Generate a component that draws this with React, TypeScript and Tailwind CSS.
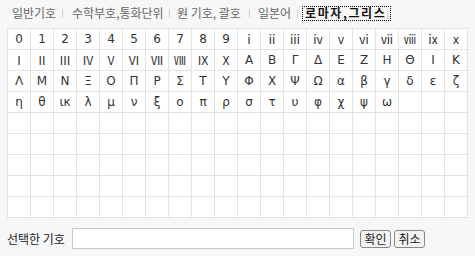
import React from "react";

const rows: string[][] = [
  ["0","1","2","3","4","5","6","7","8","9","ⅰ","ⅱ","ⅲ","ⅳ","ⅴ","ⅵ","ⅶ","ⅷ","ⅸ","ⅹ"],
  ["Ⅰ","Ⅱ","Ⅲ","Ⅳ","Ⅴ","Ⅵ","Ⅶ","Ⅷ","Ⅸ","Ⅹ","Α","Β","Γ","Δ","Ε","Ζ","Η","Θ","Ι","Κ"],
  ["Λ","Μ","Ν","Ξ","Ο","Π","Ρ","Σ","Τ","Υ","Φ","Χ","Ψ","Ω","α","β","γ","δ","ε","ζ"],
  ["η","θ","ικ","λ","μ","ν","ξ","ο","π","ρ","σ","τ","υ","φ","χ","ψ","ω","","",""],
];

const cells: string[] = [];
for (let r = 0; r < 9; r++) {
  for (let c = 0; c < 20; c++) {
    cells.push(rows[r] ? rows[r][c] : "");
  }
}

const isRoman = (s: string) => /[\u2160-\u217f]/.test(s);

function Sep() {
  return <span className="inline-block h-[9px] w-px shrink-0 bg-[#d0d0d0]" />;
}

export default function App() {
  return (
    <div
      className="w-[475px] h-[256px] bg-[#f7f7f7] text-[12px] overflow-hidden"
      style={{ fontFamily: '"Noto Sans CJK KR", "DejaVu Sans", sans-serif' }}
    >
      <div className="flex h-[28px] items-center pl-[12px] pb-[2px] text-[#666] leading-none whitespace-nowrap">
        <span className="w-[50px] shrink-0">일반기호</span>
        <Sep />
        <span className="w-[106px] shrink-0 pl-[9px]">수학부호,통화단위</span>
        <Sep />
        <span className="w-[79px] shrink-0 pl-[7px]">원 기호, 괄호</span>
        <Sep />
        <span className="w-[47px] shrink-0 pl-[8px]">일본어</span>
        <Sep />
        <span className="ml-[4px] flex h-[15px] w-[89px] shrink-0 items-center border border-dotted border-black pl-[2px] font-bold tracking-[1.6px] text-[#111]">
          로마자,그리스
        </span>
        <span className="-ml-[4px]">
          <Sep />
        </span>
      </div>
      <div className="ml-[7px] grid w-[461px] grid-cols-[repeat(20,23px)] border-l border-t border-[#e2e2e2] bg-white">
        {cells.map((ch, i) => (
          <div
            key={i}
            className="flex h-[21px] items-center justify-center border-b border-r border-[#e2e2e2] text-[12px] text-[#333] leading-none"
            style={{
              fontFamily: isRoman(ch)
                ? '"Noto Sans CJK KR", sans-serif'
                : '"DejaVu Sans", sans-serif',
            }}
          >
            {ch}
          </div>
        ))}
      </div>
      <div className="mt-[10px] flex items-center pl-[7px]">
        <span className="text-[#222] w-[65px]">선택한 기호</span>
        <input className="h-[21px] w-[282px] border border-[#c8c8c8] bg-white outline-none" />
        <button className="ml-[6px] h-[18px] w-[31px] rounded-[3px] border border-[#888] bg-[#f3f3f3] text-[12px] leading-none text-[#222]">
          확인
        </button>
        <button className="ml-[3px] h-[18px] w-[31px] rounded-[3px] border border-[#888] bg-[#f3f3f3] text-[12px] leading-none text-[#222]">
          취소
        </button>
      </div>
    </div>
  );
}
